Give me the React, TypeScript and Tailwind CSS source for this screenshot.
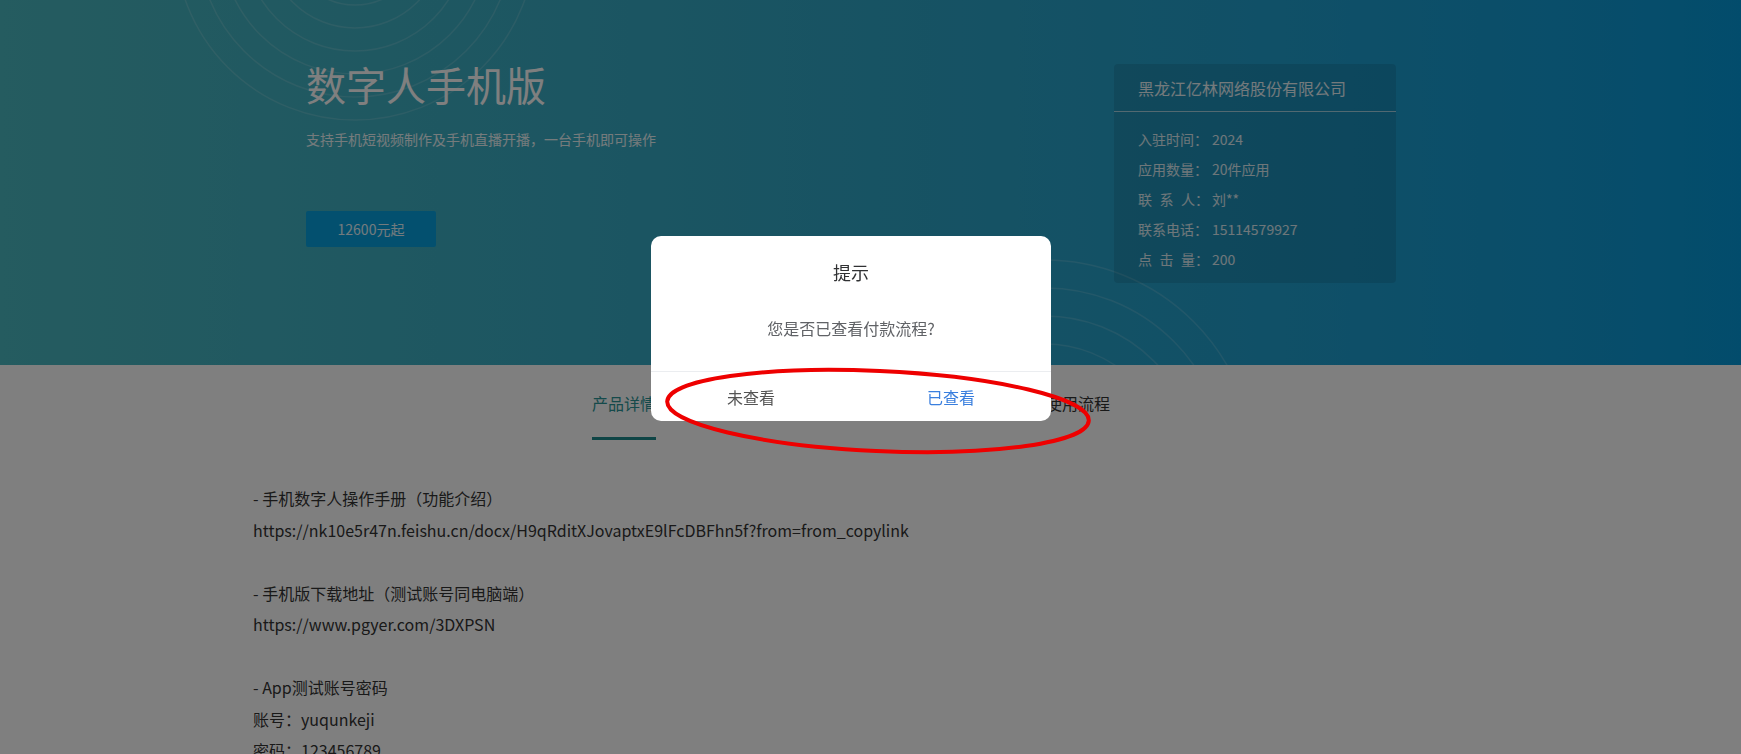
const infoRows = [
  { label: "入驻时间", value: "2024" },
  { label: "应用数量", value: "20件应用" },
  { label: "联系人", value: "刘**", spaced: true },
  { label: "联系电话", value: "15114579927" },
  { label: "点击量", value: "200", spaced: true },
];

const tabs = ["产品详情", "付款流程", "使用流程"];

function Rings({ cx, cy, radii }: { cx: number; cy: number; radii: number[] }) {
  return (
    <>
      {radii.map((r) => (
        <circle key={r} cx={cx} cy={cy} r={r} fill="none" stroke="white" strokeOpacity="0.15" strokeWidth="1.5" />
      ))}
    </>
  );
}

function Hero() {
  return (
    <div className="relative h-[365px] overflow-hidden bg-linear-to-r from-[#4ab8c0] via-[#2fa6c6] to-[#0599d8]">
      {/* decorative rings */}
      <svg className="absolute inset-0 w-full h-full" width="1741" height="365">
        <Rings cx={355} cy={-60} radii={[19, 42, 65, 88, 111, 134, 157, 180]} />
        <Rings cx={1045} cy={470} radii={[42, 70, 98, 126, 154, 182, 210]} />
      </svg>
      <div className="relative ml-[306px] w-[1090px] pt-[60px] flex justify-between">
        <div>
          <h1 className="text-[40px] leading-[48px] text-white">数字人手机版</h1>
          <p className="mt-[21px] text-[14px] leading-[20px] text-white/90">
            支持手机短视频制作及手机直播开播，一台手机即可操作
          </p>
          <button className="mt-[62px] w-[130px] h-[36px] rounded-[2px] bg-[#07a1df] text-[14px] text-white/90">
            12600元起
          </button>
        </div>
        <div className="mt-[4px] w-[282px] h-[219px] rounded-[4px] bg-black/10">
          <div className="h-[48px] px-[24px] flex items-center border-b border-white/60 text-[16px] text-white/90">
            黑龙江亿林网络股份有限公司
          </div>
          <div className="px-[24px] pt-[12px] text-[14px] text-white/85">
            {infoRows.map((row) => (
              <div key={row.label} className="h-[30px] flex items-center">
                <span className="w-[74px] flex">
                  {row.spaced ? (
                    <span className="w-[57px] flex justify-between">
                      {row.label.split("").map((c) => (
                        <span key={c}>{c}</span>
                      ))}
                    </span>
                  ) : (
                    <span>{row.label}</span>
                  )}
                  <span>：</span>
                </span>
                <span>{row.value}</span>
              </div>
            ))}
          </div>
        </div>
      </div>
    </div>
  );
}

function Content() {
  return (
    <div className="bg-white">
      <div className="flex justify-center gap-[163px] pr-[39px]">
        {tabs.map((t, i) => (
          <div
            key={t}
            className={
              i === 0
                ? "pt-[26px] pb-[22px] border-b-[3px] border-[#1f8a8c] text-[16px] leading-[24px] text-[#2a9496]"
                : "pt-[26px] pb-[22px] border-b-[3px] border-transparent text-[16px] leading-[24px] text-[#333]"
            }
          >
            {t}
          </div>
        ))}
      </div>
      {/* description */}
      <div className="ml-[253px] mt-[43px] pb-[80px] text-[16px] leading-[31.5px] text-[#333]">
        <p>- 手机数字人操作手册（功能介绍）</p>
        <p>https://nk10e5r47n.feishu.cn/docx/H9qRditXJovaptxE9lFcDBFhn5f?from=from_copylink</p>
        <p>&nbsp;</p>
        <p>- 手机版下载地址（测试账号同电脑端）</p>
        <p>https://www.pgyer.com/3DXPSN</p>
        <p>&nbsp;</p>
        <p>- App测试账号密码</p>
        <p>账号：yuqunkeji</p>
        <p>密码：123456789</p>
      </div>
    </div>
  );
}

function ConfirmDialog() {
  return (
    <div className="fixed inset-0 z-10 bg-black/50">
      <div className="ml-[651px] mt-[236px] w-[400px] rounded-[10px] bg-white overflow-hidden">
        <div className="pt-[24px] text-center text-[18px] leading-[24px] text-[#303133]">提示</div>
        <div className="mt-[32px] pb-[31px] text-center text-[16px] leading-[24px] text-[#606266]">
          您是否已查看付款流程?
        </div>
        <div className="h-[50px] flex border-t border-[#ebedf0] text-[16px]">
          <button className="flex-1 text-[#555]">未查看</button>
          <button className="flex-1 text-[#3a7fde]">已查看</button>
        </div>
      </div>
      {/* red annotation */}
      <svg className="absolute left-[655px] top-[362px]" width="445" height="100">
        <ellipse
          cx="223"
          cy="49"
          rx="211"
          ry="40"
          transform="rotate(2.6 223 49)"
          fill="none"
          stroke="#ee0000"
          strokeWidth="4"
        />
      </svg>
    </div>
  );
}

export default function App() {
  return (
    <div className="min-h-screen bg-white font-['Noto_Sans_CJK_SC','Microsoft_YaHei',sans-serif]">
      <Hero />
      <Content />
      <ConfirmDialog />
    </div>
  );
}
